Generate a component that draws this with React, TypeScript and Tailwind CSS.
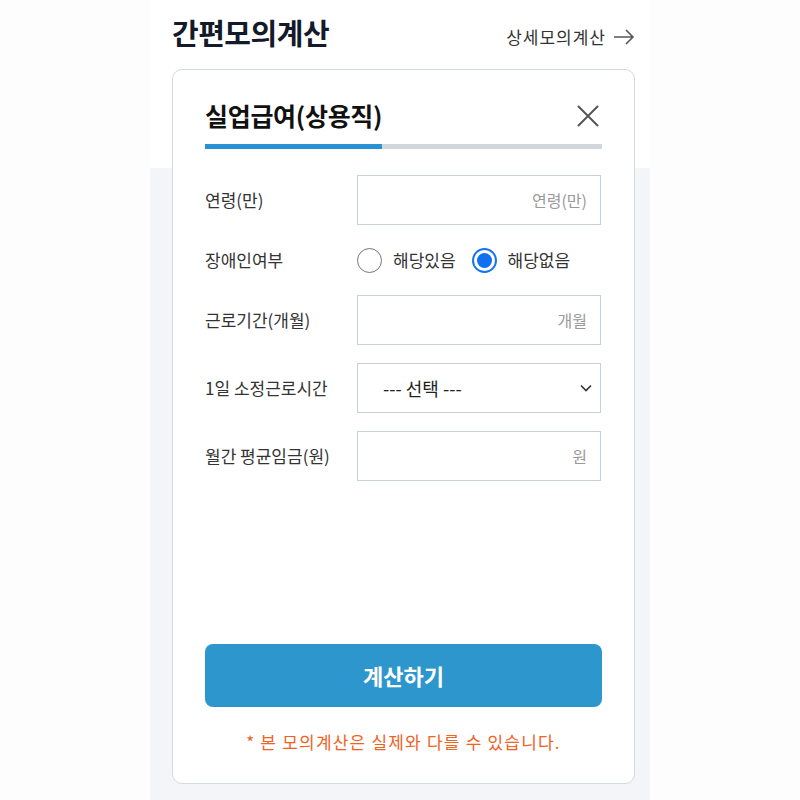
import React, { useState } from 'react';

const font = { fontFamily: '"Noto Sans CJK KR", "Noto Sans", sans-serif' };

const TextField: React.FC<{ placeholder: string }> = ({ placeholder }) => (
  <input
    className="h-[50px] w-[244px] border border-[#c8d0d9] bg-white px-[13px] text-right text-[16px] text-[#333] placeholder:text-[#9a9a9a] outline-none"
    placeholder={placeholder}
  />
);

const Radio: React.FC<{ checked: boolean; label: string; onClick: () => void }> = ({ checked, label, onClick }) => (
  <button className="flex items-center gap-[11px]" onClick={onClick}>
    {checked ? (
      <span className="flex h-[25px] w-[25px] items-center justify-center rounded-full border-2 border-[#1473f0] bg-white">
        <span className="h-[15px] w-[15px] rounded-full bg-[#0f70f2]" />
      </span>
    ) : (
      <span className="h-[25px] w-[25px] rounded-full border-[1.5px] border-[#767676] bg-white" />
    )}
    <span className="text-[17px] text-[#333]">{label}</span>
  </button>
);

export default function App() {
  const [disabled, setDisabled] = useState(false);

  return (
    <div className="min-h-[800px] bg-[#fdfdfd]" style={font}>
      <div className="mx-auto flex h-[800px] w-[500px] flex-col bg-[linear-gradient(to_bottom,#ffffff_0,#ffffff_168px,#f3f5f9_168px)] pl-[22px] pr-[15px]">
        {/* 헤더 */}
        <div className="flex h-[69px] items-start justify-between pt-[12px]">
          <h1 className="text-[29px] font-bold leading-[40px] tracking-[-0.5px] text-[#131a2a]">간편모의계산</h1>
          <a className="mt-[14px] flex items-center gap-[8px] text-[17px] leading-[22px] tracking-[1px] text-[#333]">
            상세모의계산
            <svg width="21" height="16" viewBox="0 0 21 16" fill="none" stroke="#555" strokeWidth="1.6">
              <path d="M0 8h19M12 1l7 7-7 7" />
            </svg>
          </a>
        </div>

        {/* 카드 */}
        <div className="flex h-[715px] flex-col rounded-[10px] border border-[#d3dae2] bg-white px-[32px] pb-[31px] pt-[26px]">
          <div className="flex h-[40px] items-center justify-between">
            <h2 className="text-[25px] font-bold tracking-[-0.3px] text-[#111]">실업급여(상용직)</h2>
            <svg width="24" height="24" viewBox="0 0 24 24" stroke="#555" strokeWidth="2" className="mr-[2px]">
              <path d="M2 2l20 20M22 2L2 22" />
            </svg>
          </div>
          <div className="mt-[8px] flex h-[5px] w-full bg-[#d2d7de]">
            <div className="h-full w-[44.5%] bg-[#2a92d3]" />
          </div>

          <div className="mt-[26px] flex flex-col gap-[18px]">
            <div className="flex items-center">
              <span className="w-[152px] text-[17px] text-[#333]">연령(만)</span>
              <TextField placeholder="연령(만)" />
            </div>
            <div className="flex h-[34px] items-center">
              <span className="w-[152px] text-[17px] text-[#333]">장애인여부</span>
              <div className="flex items-center gap-[16px]">
                <Radio checked={disabled} label="해당있음" onClick={() => setDisabled(true)} />
                <Radio checked={!disabled} label="해당없음" onClick={() => setDisabled(false)} />
              </div>
            </div>
            <div className="flex items-center">
              <span className="w-[152px] text-[17px] text-[#333]">근로기간(개월)</span>
              <TextField placeholder="개월" />
            </div>
            <div className="flex items-center">
              <span className="w-[152px] text-[17px] text-[#333]">1일 소정근로시간</span>
              <div className="flex h-[50px] w-[244px] items-center justify-between border border-[#c8d0d9] bg-white pl-[25px] pr-[8px]">
                <span className="text-[18px] text-[#222]">--- 선택 ---</span>
                <svg width="12" height="8" viewBox="0 0 12 8" fill="none" stroke="#333" strokeWidth="1.6">
                  <path d="M1 1.5l5 5 5-5" />
                </svg>
              </div>
            </div>
            <div className="flex items-center">
              <span className="w-[152px] text-[17px] text-[#333]">월간 평균임금(원)</span>
              <TextField placeholder="원" />
            </div>
          </div>

          <button className="mt-auto flex h-[63px] w-full items-center justify-center rounded-[8px] bg-[#2d96cc] text-[22px] font-bold text-white">
            계산하기
          </button>
          <p className="mt-[25px] text-center text-[17px] leading-[20px] tracking-[1.2px] text-[#f0621f]">
            * 본 모의계산은 실제와 다를 수 있습니다.
          </p>
        </div>
        <div className="flex-1" />
      </div>
    </div>
  );
}
